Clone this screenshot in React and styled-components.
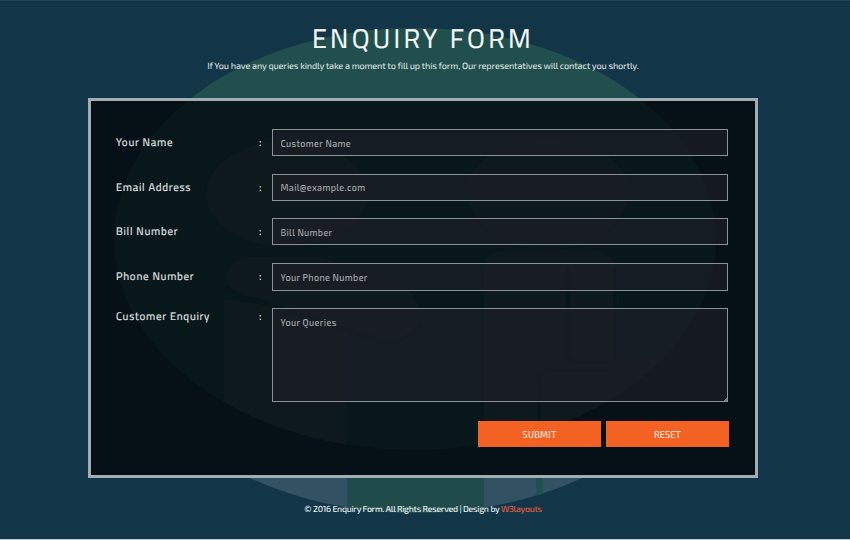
import React from "react";
import styled, { createGlobalStyle } from "styled-components";

const Global = createGlobalStyle`
  * { box-sizing: border-box; }
  body { margin: 0; background: #123647; font-family: "Exo 2", Roboto, sans-serif; text-rendering: geometricPrecision; }
`;

const Page = styled.div`
  position: relative;
  display: flex;
  flex-direction: column;
  align-items: center;
  width: 850px;
  height: 540px;
  overflow: hidden;
  padding-right: 4px;
  background: #123647;
  border-top: 1px solid #1e465a;
  border-bottom: 1px solid #b3cbd8;
`;

const PageArt = styled.svg`
  position: absolute;
  left: 0;
  top: -1px;
`;

const PanelArt = styled.svg`
  position: absolute;
  left: 0;
  top: 0;
`;

const Title = styled.h1`
  position: relative;
  margin: 21px 0 0;
  height: 34px;
  font-family: "Titillium Web", "Exo 2", Roboto, sans-serif;
  font-size: 27px;
  line-height: 34px;
  font-weight: 400;
  letter-spacing: 3.3px;
  -webkit-text-stroke: 0.2px #f7fafa;
  white-space: nowrap;
  color: #f7fafa;
`;

const Intro = styled.p`
  position: relative;
  margin: 2px 0 0;
  height: 16px;
  font-size: 9.1px;
  line-height: 16px;
  font-weight: 500;
  letter-spacing: -0.16px;
  white-space: nowrap;
  color: #d5dfdf;
`;

const Panel = styled.form`
  position: relative;
  width: 670px;
  height: 380px;
  margin-top: 24px;
  padding: 28px 26px 0 25px;
  border: 3px solid #a2adb3;
  background: #051117;
`;

const Fields = styled.div`
  position: relative;
  display: grid;
  grid-template-columns: 143px 13px 456px;
  grid-template-rows: 27px 27px 27px 28px 94px;
  row-gap: 17.5px;
`;

const Label = styled.label`
  align-self: ${(p) => (p.$top ? "start" : "center")};
  padding-top: 1px;
  font-family: "Titillium Web", "Exo 2", Roboto, sans-serif;
  font-size: 11px;
  line-height: 16px;
  font-weight: 400;
  letter-spacing: ${(p) => p.$spacing}px;
  -webkit-text-stroke: 0.15px #e9eded;
  white-space: nowrap;
  color: #e9eded;
`;

const Colon = styled(Label).attrs({ as: "span", $spacing: 0 })``;

const Input = styled.input`
  width: 456px;
  height: 100%;
  padding: 1px 7.5px 0;
  border: 1px solid #8b9295;
  border-radius: 0;
  outline: none;
  background: rgba(31, 32, 41, 0.6);
  color: #fff;
  font-family: inherit;
  font-size: 9px;
  font-weight: 500;
  letter-spacing: ${(p) => p.$spacing}px;
  &::placeholder { color: #a9abae; opacity: 1; }
`;

const TextArea = styled(Input).attrs({ as: "textarea" })`
  display: block;
  padding: 8px 7.5px;
  line-height: 11px;
  resize: none;
  background-image: linear-gradient(135deg, transparent 55%, #6d7478 55%);
  background-size: 4px 4px;
  background-position: right bottom;
  background-repeat: no-repeat;
`;

const Actions = styled.div`
  position: relative;
  display: flex;
  justify-content: flex-end;
  gap: 5px;
  width: 613px;
  margin-top: 19px;
`;

const Button = styled.button`
  width: 123px;
  height: 26px;
  padding: 1px 0 0;
  border: 0;
  background: #f36223;
  color: #fbe9e0;
  font-family: inherit;
  font-size: 9px;
  font-weight: 500;
  letter-spacing: ${(p) => p.$spacing}px;
`;

const Footer = styled.p`
  position: relative;
  margin: 23px 0 0;
  font-size: 8.75px;
  line-height: 16px;
  font-weight: 500;
  letter-spacing: -0.27px;
  white-space: nowrap;
  color: #eef4f4;
`;

const Link = styled.a`
  color: #e85f42;
  text-decoration: none;
`;

const rows = [
  { label: "Your Name", hint: "Customer Name" },
  { label: "Email Address", hint: "Mail@example.com" },
  { label: "Bill Number", hint: "Bill Number" },
  { label: "Phone Number", hint: "Your Phone Number" },
];

export default function App() {
  return (
    <Page>
      <Global />
      <PageArt width="850" height="540" viewBox="0 0 850 540" aria-hidden="true">
        <defs>
          <clipPath id="lower"><ellipse cx="416" cy="302" rx="301" ry="211" /></clipPath>
        </defs>
        <ellipse cx="415" cy="239" rx="301" ry="211" fill="#204f4d" />
        <g clipPath="url(#lower)">
          <rect x="110" y="478" width="610" height="40" fill="#325264" />
          <rect x="347" y="478" width="137" height="40" fill="#1f4c4a" />
          <rect x="536" y="478" width="7" height="40" fill="#20504f" />
        </g>
      </PageArt>
      <Title>ENQUIRY FORM</Title>
      <Intro>If You have any queries kindly take a moment to fill up this form, Our representatives will contact you shortly.</Intro>
      <Panel onSubmit={(e) => e.preventDefault()}>
        <PanelArt width="664" height="374" viewBox="91 101 664 374" aria-hidden="true">
          <defs>
            <clipPath id="disc"><ellipse cx="415" cy="239" rx="301" ry="211" /></clipPath>
          </defs>
          <g clipPath="url(#disc)">
            <rect x="91" y="101" width="664" height="374" fill="#07171a" />
            <g fill="#0d191d">
              <ellipse cx="287" cy="194" rx="81" ry="53" />
              <ellipse cx="548" cy="193" rx="81" ry="56" />
              <path d="M224 455V300L282 306L370 337Q400 350 425 329L484 282V455H484V268Q484 250 510 250H590Q618 250 618 282V360H675V455H484V282L425 329Q400 350 347 332V455Z" />
              <path d="M248 257H320L395 282Q421 292 421 322Q407 350 370 337L245 294Q225 290 226 275Q229 260 248 257Z" />
            </g>
            <g fill="none" stroke="#071619" strokeWidth="4">
              <path d="M226 287Q232 298 260 302L370 337Q400 350 422 324" />
              <path d="M482 264V455M568 268V352Q568 363 582 363H608" />
              <path d="M539 455V382Q539 371 551 371H608" />
              <path d="M615 268V360" />
            </g>
          </g>
        </PanelArt>
        <Fields>
          {rows.map((r) => (
            <React.Fragment key={r.label}>
              <Label $spacing={0.72}>{r.label}</Label>
              <Colon>:</Colon>
              <Input $spacing={0.35} placeholder={r.hint} />
            </React.Fragment>
          ))}
          <Label $top $spacing={0.72}>Customer Enquiry</Label>
          <Colon $top>:</Colon>
          <TextArea $spacing={0.35} placeholder="Your Queries" />
        </Fields>
        <Actions>
          <Button type="submit" $spacing={0.25}>SUBMIT</Button>
          <Button type="reset" $spacing={0.2}>RESET</Button>
        </Actions>
      </Panel>
      <Footer>
        © 2016 Enquiry Form. All Rights Reserved | Design by <Link>W3layouts</Link>
      </Footer>
    </Page>
  );
}
